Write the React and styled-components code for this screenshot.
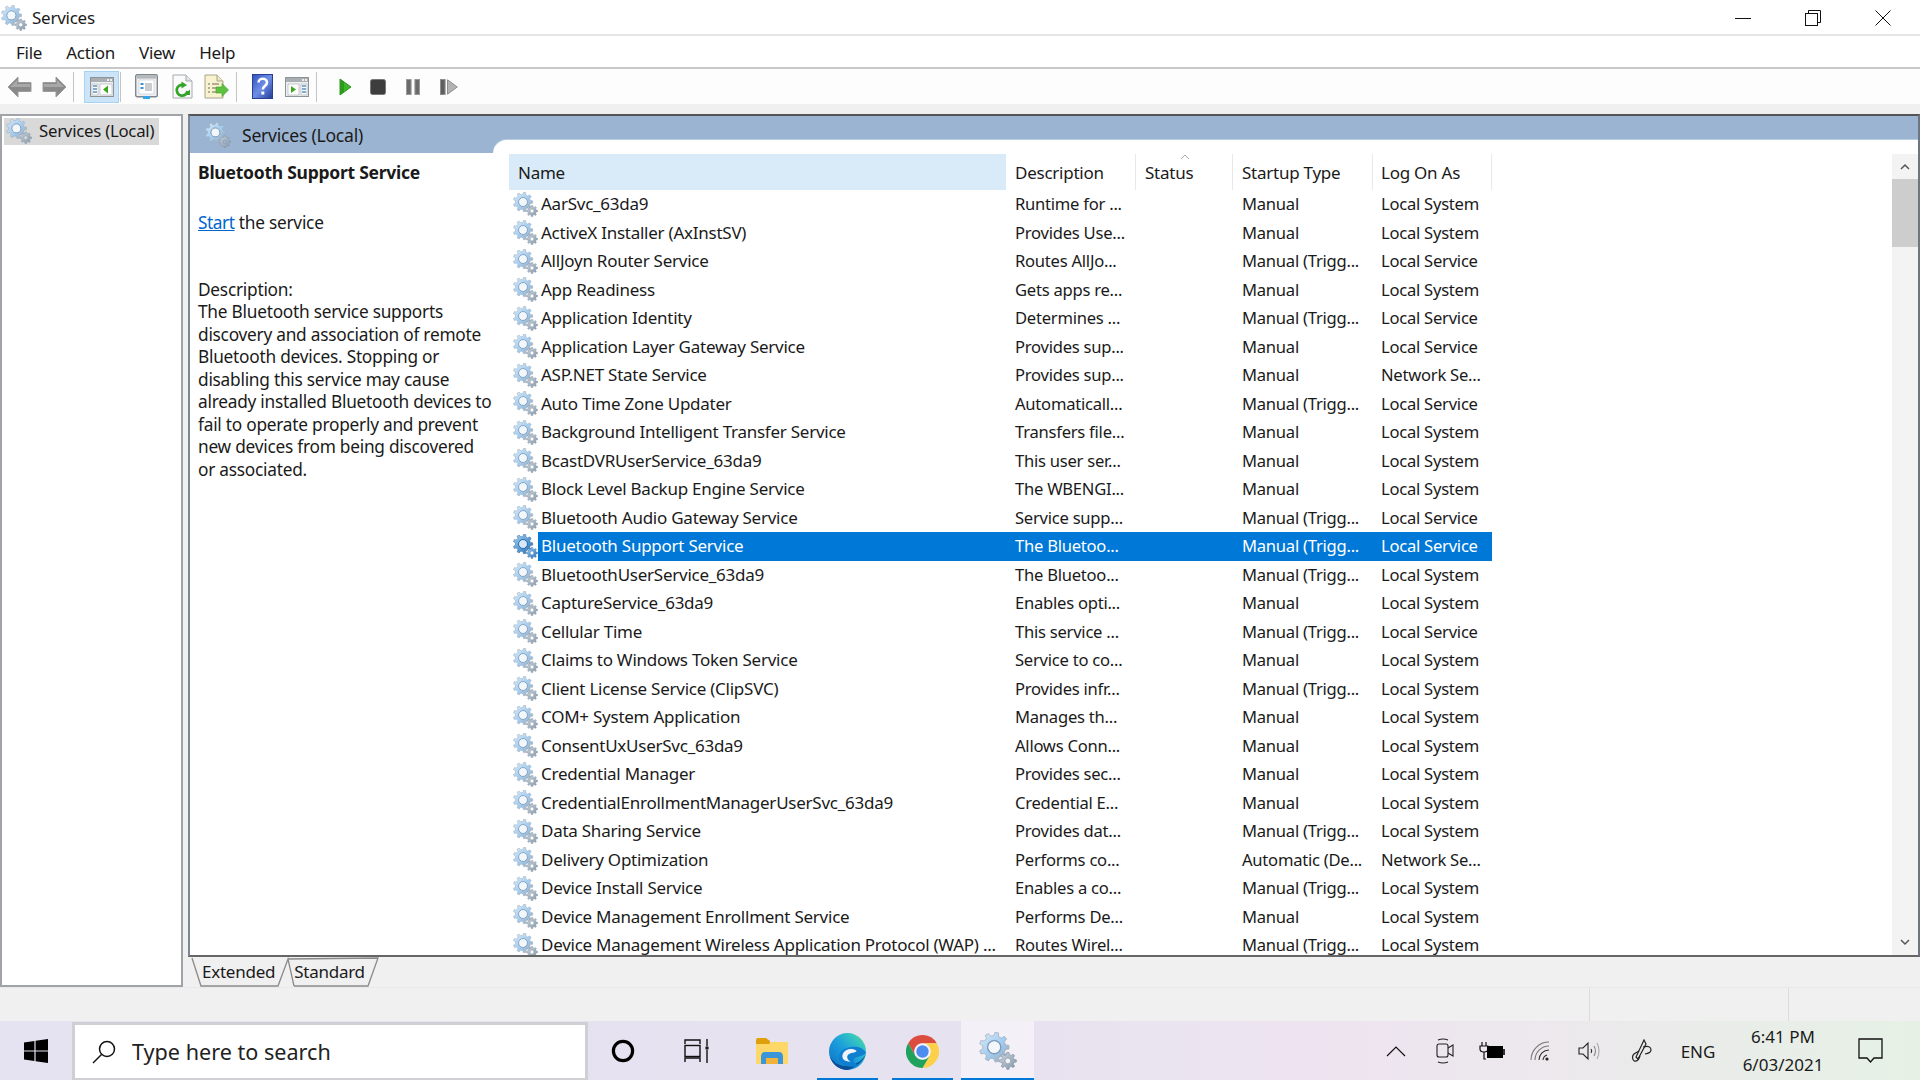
import React from 'react';
import styled, { createGlobalStyle } from 'styled-components';

const Global = createGlobalStyle`
  html, body { margin: 0; padding: 0; background: #f0f0f0; }
  body { font-family: "Noto Sans", "Open Sans", sans-serif; color: #1a1a1a; overflow: hidden; }
  * { box-sizing: border-box; }
`;

const Window = styled.div`width:1920px;height:1080px;display:flex;flex-direction:column;overflow:hidden;font-size:17px;letter-spacing:-0.25px;`;
const TitleBar = styled.div`height:36px;flex:none;background:#fff;border-bottom:2px solid #e5e5e5;display:flex;align-items:center;padding:2px 2px 0 1px;`;
const TitleText = styled.span`margin-left:5px;font-size:17px;line-height:20px;`;
const WinButtons = styled.div`margin-left:auto;display:flex;`;
const WinBtn = styled.div`width:70px;height:32px;display:flex;align-items:center;justify-content:center;`;
const MenuBar = styled.div`height:33px;flex:none;background:#fff;border-bottom:2px solid #c8c8c8;display:flex;align-items:center;padding:2px 0 0 16px;gap:24px;`;
const MenuItem = styled.span`font-size:17px;`;
const Toolbar = styled.div`height:35px;flex:none;background:#fdfdfd;display:flex;align-items:center;padding-left:7px;`;
const ToolSlot = styled.div`flex:none;display:flex;align-items:center;justify-content:center;margin-left:${p=>p.$ml||0}px;width:${p=>p.$w}px;height:${p=>p.$h||32}px;
  ${p=>p.$active?'background:#cce4f7;border:1px solid #a8d2f2;':''}`;
const Sep = styled.div`flex:none;width:1px;height:30px;background:#c4c4c4;margin-left:${p=>p.$ml||0}px;`;
const Workspace = styled.div`flex:none;height:883px;padding-top:10px;display:flex;background:#f0f0f0;`;
const TreePane = styled.div`width:183px;height:873px;flex:none;background:#fff;border:2px solid #a0a4a8;padding:2px;`;
const TreeItem = styled.div`width:155px;height:27px;background:#d9d9d9;display:flex;align-items:center;padding:0 0 2px 2px;gap:7px;font-size:16.8px;white-space:nowrap;`;
const MainCol = styled.div`margin-left:5px;flex:1;display:flex;flex-direction:column;min-width:0;`;
const MainPane = styled.div`height:843px;flex:none;display:flex;background:#fff;border:2px solid #6c7580;border-top:2px solid #555;border-left:2px solid #7b8794;border-bottom:2px solid #666;overflow:hidden;`;
const InfoCol = styled.div`width:303px;flex:none;display:flex;flex-direction:column;`;
const Band = styled.div`height:37px;flex:none;background:#9ab4d1;display:flex;align-items:center;padding-left:15px;gap:11px;font-size:17.6px;`;
const InfoBody = styled.div`padding:8px 0 0 8px;line-height:22.45px;font-size:17.3px;white-space:nowrap;`;
const InfoTitle = styled.div`font-weight:700;font-size:17.5px;`;
const StartLine = styled.div`margin-top:29px;`;
const StartLink = styled.span`color:#0066cc;text-decoration:underline;letter-spacing:-0.45px;`;
const Desc = styled.div`margin-top:44px;`;
const ListCol = styled.div`flex:1;min-width:0;background:linear-gradient(#9ab4d1 37px,#fff 37px);`;
const ListInner = styled.div`height:calc(100% - 23px);margin-top:23px;background:#fff;border-top-left-radius:14px;padding:14px 0 0 16px;display:flex;position:relative;overflow:hidden;border-top:1px solid #b8cde4;`;
const Table = styled.div`width:983px;flex:none;`;
const HeadRow = styled.div`display:grid;grid-template-columns:497px 130px 97px 140px 119px;height:36px;`;
const HeadCell = styled.div`display:flex;align-items:center;padding-left:${p=>p.$pl}px;position:relative;font-size:17px;background:${p=>p.$sel?'#d9ebf9':'transparent'};border-right:${p=>p.$sel?'none':'1px solid #e8e8e8'};`;
const Caret = styled.svg`position:absolute;left:43px;top:-1px;`;
const Row = styled.div`display:grid;grid-template-columns:497px 130px 97px 140px 119px;height:28.5px;align-items:stretch;font-size:16.6px;white-space:nowrap;color:${p=>p.$sel?'#fff':'#1a1a1a'};`;
const NameCell = styled.div`display:flex;align-items:stretch;overflow:hidden;`;
const IconBox = styled.div`width:29px;flex:none;display:flex;align-items:center;padding-left:4px;`;
const NameLabel = styled.div`flex:1;display:flex;align-items:center;padding:0 0 1px 3px;font-size:17px;background:${p=>p.$sel?'#0078d7':'transparent'};`;
const Cell = styled.div`display:flex;align-items:center;padding:0 0 1px ${p=>p.$pl||0}px;background:${p=>p.$sel?'#0078d7':'transparent'};`;
const Scroll = styled.div`position:absolute;right:0;top:0;bottom:0;width:26px;background:#f3f3f3;display:flex;flex-direction:column;align-items:center;margin-top:14px;`;
const ScrollArrow = styled.div`height:25px;width:100%;flex:none;display:flex;align-items:center;justify-content:center;background:#f3f3f3;`;
const Thumb = styled.div`width:100%;height:68px;background:#cdcdcd;flex:none;`;
const ScrollFill = styled.div`flex:1;`;
const TabBar = styled.div`height:30px;flex:none;display:flex;position:relative;padding-left:14px;align-items:center;font-size:17px;`;
const TabShapes = styled.svg`position:absolute;left:0;top:0;`;
const TabLabel = styled.span`margin-right:19px;position:relative;line-height:26px;`;
const StatusBar = styled.div`height:34px;flex:none;background:#f0f0f0;border-top:1px solid #e8e8e8;display:flex;justify-content:flex-end;`;
const StatusSeg = styled.div`width:${p=>p.$w}px;border-left:1px solid #dcdcdc;`;
const Taskbar = styled.div`height:60px;flex:none;display:flex;align-items:stretch;background:linear-gradient(90deg,#e5e2f1 0%,#e6e2f0 50%,#eee4f0 70%,#ece9ec 82%,#e6f1e5 100%);`;
const StartBtn = styled.div`width:72px;flex:none;display:flex;align-items:center;justify-content:center;`;
const SearchBox = styled.div`width:516px;flex:none;background:#fff;border:3px solid #cfcfd4;display:flex;align-items:center;padding-left:17px;gap:16px;font-size:21.6px;letter-spacing:0;color:#222;margin-top:1px;`;
const TaskSlot = styled.div`flex:none;width:${p=>p.$w}px;margin-left:${p=>p.$ml||0}px;display:flex;align-items:center;justify-content:center;position:relative;background:${p=>p.$on?'#f3f0f8':'transparent'};
  ${p=>p.$run?`&::after{content:"";position:absolute;left:0;right:0;bottom:0;height:3px;background:#0078d7;}`:''}`;
const Tray = styled.div`margin-left:auto;display:flex;align-items:center;height:100%;`;
const TrayItem = styled.div`flex:none;width:${p=>p.$w}px;display:flex;align-items:center;justify-content:center;`;
const Lang = styled.span`font-size:17px;letter-spacing:0;`;
const Clock = styled.div`flex:none;width:118px;text-align:center;font-size:17px;line-height:28px;letter-spacing:0;`;

function gearD(cx, cy, ro, ri, n, hole) {
  let d = '';
  const step = (Math.PI * 2) / n;
  for (let i = 0; i < n; i++) {
    const a = i * step;
    const w = step * 0.17, w2 = step * 0.3;
    const pts = [[ri, a - w2], [ro, a - w], [ro, a + w], [ri, a + w2]];
    pts.forEach(([r, t], j) => {
      const x = (cx + r * Math.cos(t)).toFixed(2), y = (cy + r * Math.sin(t)).toFixed(2);
      d += (i === 0 && j === 0 ? 'M' : 'L') + x + ' ' + y + ' ';
    });
  }
  d += 'Z ';
  d += `M${cx + hole} ${cy} A${hole} ${hole} 0 1 0 ${cx - hole} ${cy} A${hole} ${hole} 0 1 0 ${cx + hole} ${cy} Z`;
  return d;
}

const Defs = () => (
  <svg width="0" height="0" style={{ position: 'absolute' }}>
    <defs>
      <linearGradient id="gA" x1="0" y1="0" x2="1" y2="1">
        <stop offset="0" stopColor="#d8ebfa" /><stop offset=".55" stopColor="#a3cbee" /><stop offset="1" stopColor="#9aa6b2" />
      </linearGradient>
      <linearGradient id="gB" x1="0" y1="0" x2="1" y2="1">
        <stop offset="0" stopColor="#cdd6de" /><stop offset="1" stopColor="#8296a8" />
      </linearGradient>
      <linearGradient id="gC" x1="0" y1="0" x2="1" y2="1">
        <stop offset="0" stopColor="#a9d4f5" /><stop offset=".6" stopColor="#4f93d3" /><stop offset="1" stopColor="#3b6ea5" />
      </linearGradient>
      <linearGradient id="eG" x1="0" y1="1" x2="1" y2="0">
        <stop offset="0" stopColor="#0b6cc4" /><stop offset=".5" stopColor="#1c9fdc" /><stop offset=".78" stopColor="#35c6c0" /><stop offset="1" stopColor="#6fdc6a" />
      </linearGradient>
    </defs>
  </svg>
);

const Gear = ({ size = 25, sel }) => (
  <svg width={size} height={size} viewBox="0 0 25 25">
    <path d={gearD(10, 10, 9.8, 7.6, 9, 4.3)} fill={sel ? 'url(#gC)' : 'url(#gA)'} fillRule="evenodd" stroke={sel ? '#3d6f9e' : '#a2aeba'} strokeWidth=".5" />
    <circle cx="10" cy="10" r="4.3" fill="none" stroke={sel ? '#1f5f9e' : '#7c9cbc'} strokeWidth=".9" />
    <circle cx="10" cy="10" r="3.7" fill={sel ? '#d4e8f8' : '#f2f7fc'} />
    <path d={gearD(19, 19, 5.6, 4.2, 8, 1.9)} fill={sel ? 'url(#gC)' : 'url(#gB)'} fillRule="evenodd" stroke={sel ? '#3d6f9e' : '#7c8c9c'} strokeWidth=".4" />
  </svg>
);

const Arrow = ({ flip }) => (
  <svg width="25" height="24" viewBox="0 0 25 24" style={flip ? { transform: 'scaleX(-1)' } : undefined}>
    <path d="M1 12 L11 2 L11 7.5 L24 7.5 L24 16.5 L11 16.5 L11 22 Z" fill="#8a8a8a" stroke="#9c9c9c" strokeLinejoin="round" />
    <path d="M3 12 L10 5 L10 9 L23 9 L23 12 Z" fill="#a8a8a8" />
  </svg>
);
const PanelIcon = ({ right }) => (
  <svg width="24" height="20" viewBox="0 0 24 20">
    <rect x=".5" y=".5" width="23" height="19" fill="#eef0f2" stroke="#8d9499" />
    <rect x="1" y="1" width="22" height="4" fill="#a9aeb3" />
    <rect x="17" y="2" width="2" height="2" fill="#eee" /><rect x="20" y="2" width="2" height="2" fill="#eee" />
    {right ? <>
      <rect x="3" y="7" width="11" height="11" fill="#fff" stroke="#b0b4b8" strokeWidth=".7" />
      <path d="M6 9 L11 12.5 L6 16 Z" fill="#3aa71e" />
      <rect x="16" y="7" width="6" height="11" fill="#fff" stroke="#b0b4b8" strokeWidth=".7" />
      <path d="M17 9h4M17 12h4M17 15h4" stroke="#5a8fc5" strokeWidth="1.6" />
    </> : <>
      <rect x="2" y="7" width="6" height="11" fill="#fff" stroke="#b0b4b8" strokeWidth=".7" />
      <path d="M3 9h4M3 12h4M3 15h4" stroke="#5a8fc5" strokeWidth="1.6" />
      <rect x="10" y="7" width="12" height="11" fill="#fff" stroke="#b0b4b8" strokeWidth=".7" />
      <path d="M18 8.5 L13 12.5 L18 16.5 Z" fill="#3aa71e" />
    </>}
  </svg>
);
const PropsIcon = () => (
  <svg width="23" height="25" viewBox="0 0 23 25">
    <rect x=".7" y=".7" width="21.6" height="22" rx="1.5" fill="#eef0f2" stroke="#7f868c" strokeWidth="1.4" />
    <rect x="2" y="2" width="19" height="2.6" fill="#b3b8bc" />
    <rect x="4" y="6" width="15" height="14" fill="#fff" stroke="#c2c6ca" strokeWidth=".6" />
    <rect x="5.5" y="9" width="3" height="2" fill="#3f8fd1" /><rect x="5.5" y="13" width="3" height="2" fill="#3f8fd1" />
    <path d="M10 10h7M10 12h7M10 14h7M10 16h7" stroke="#8a8f94" strokeWidth=".9" />
    <rect x="8" y="22" width="7" height="3" fill="#35a5e8" />
  </svg>
);
const RefreshIcon = () => (
  <svg width="21" height="25" viewBox="0 0 21 25">
    <path d="M1 1 H14 L20 7 V24 H1 Z" fill="#fafafa" stroke="#a5a9ad" />
    <path d="M14 1 V7 H20" fill="#e3e5e7" stroke="#a5a9ad" />
    <path d="M15.5 17 A5.4 5.4 0 1 1 11.5 11" fill="none" stroke="#35a32a" strokeWidth="2.8" />
    <path d="M9.5 7.5 L15 11 L9.5 14.5 Z" fill="#35a32a" />
    <path d="M12 21 L18 21 L18 15.5 Z" fill="#35a32a" />
  </svg>
);
const ExportIcon = () => (
  <svg width="25" height="25" viewBox="0 0 25 25">
    <path d="M1 1 H13 L19 7 V24 H1 Z" fill="#f8f2cf" stroke="#a7a48f" />
    <path d="M13 1 V7 H19" fill="#eee7bf" stroke="#a7a48f" />
    <path d="M4 10h2M8 10h7M4 14h2M8 14h5M4 18h2M8 18h5" stroke="#6a6a5c" strokeWidth="1.2" />
    <path d="M12 13 H18 V9.5 L24.5 16 L18 22.5 V19 H12 Z" fill="#5cc23f" stroke="#3f9e2a" strokeWidth=".6" />
  </svg>
);
const HelpIcon = () => (
  <svg width="21" height="25" viewBox="0 0 21 25">
    <defs><linearGradient id="hB" x1="0" y1="0" x2="1" y2="1"><stop offset="0" stopColor="#2d50c0" /><stop offset=".5" stopColor="#6f8fe6" /><stop offset="1" stopColor="#213a98" /></linearGradient></defs>
    <rect x=".5" y=".5" width="20" height="24" fill="url(#hB)" stroke="#2a3f8f" />
    <path d="M6.5 8.5 C6.5 3.5 15 3.5 15 8.5 C15 12 10.8 12 10.8 15.5" fill="none" stroke="#fff" strokeWidth="2.6" />
    <rect x="9.3" y="17.5" width="3" height="3" fill="#fff" />
  </svg>
);
const Play = () => (<svg width="13" height="18" viewBox="0 0 13 18"><path d="M1 1 L12 9 L1 17 Z" fill="#3fb52a" stroke="#2d9a1c" /><path d="M1 1 L5 4 V14 L1 17Z" fill="#2d9a1c"/></svg>);
const Stop = () => (<svg width="16" height="16" viewBox="0 0 16 16"><rect x=".5" y=".5" width="15" height="15" rx="2" fill="#3d3d3d" stroke="#777" /></svg>);
const Pause = () => (<svg width="14" height="16" viewBox="0 0 14 16"><rect x=".5" y=".5" width="4.6" height="15" fill="#6b6b6b" stroke="#9a9a9a" /><rect x="8.9" y=".5" width="4.6" height="15" fill="#6b6b6b" stroke="#9a9a9a" /></svg>);
const Resume = () => (<svg width="18" height="16" viewBox="0 0 18 16"><rect x=".5" y=".5" width="4.6" height="15" fill="#5f5f5f" stroke="#8e8e8e" /><path d="M7.5 .8 L17.3 8 L7.5 15.2 Z" fill="#b3b3b3" stroke="#8e8e8e" /></svg>);

const WinLogo = () => (
  <svg width="24" height="24" viewBox="0 0 24 24"><path d="M0 3.4 L10.4 2 V11.4 H0 Z M11.6 1.8 L24 0 V11.4 H11.6 Z M0 12.6 H10.4 V22 L0 20.6 Z M11.6 12.6 H24 V24 L11.6 22.2 Z" fill="#000" /></svg>
);
const SearchIcon = () => (
  <svg width="24" height="24" viewBox="0 0 24 24" fill="none" stroke="#111" strokeWidth="1.5"><circle cx="15" cy="9" r="7.5" /><path d="M9.5 14.5 L1 23" /></svg>
);
const Cortana = () => (<svg width="24" height="24" viewBox="0 0 24 24"><circle cx="12" cy="12" r="9.6" fill="none" stroke="#000" strokeWidth="3.2" /></svg>);
const TaskView = () => (
  <svg width="26" height="24" viewBox="0 0 26 24" fill="none" stroke="#111" strokeWidth="1.4">
    <path d="M1 5 V1 H16 V5 M1 23 V19 H16 V23" />
    <rect x="1" y="6.5" width="15" height="11" />
    <path d="M23 0 V7 M23 11 V24" /><rect x="21.5" y="7.5" width="3" height="3" fill="#111" stroke="none" />
  </svg>
);
const Folder = () => (
  <svg width="32" height="27" viewBox="0 0 32 27">
    <path d="M0 2 Q0 0 2 0 H10 L14 3 V8 H0 Z" fill="#dfa00c" />
    <path d="M0 6 H13 L15 4 H31 Q32 4 32 5 V25 Q32 26 31 26 H1 Q0 26 0 25 Z" fill="#fdd768" />
    <path d="M5 26 V19 Q5 14 9 14 H23 Q27 14 27 19 V26 H22 V20 H10 V26 Z" fill="#3a96d8" />
    <rect x="10" y="20" width="12" height="6" fill="#f0b23a" />
  </svg>
);
const Edge = () => (
  <svg width="37" height="37" viewBox="0 0 36 36">
    <circle cx="18" cy="18" r="18" fill="url(#eG)" />
    <path d="M36 20 C34 27 27 33 18 36 C10 36 3 30 1 23 C6 31 15 34 23 31 C29 29 34 25 36 20 Z" fill="#0c4f94" />
    <path d="M36 19.5 C33 23 27 23 25 24.5 C22 27 25 30 29 31.5 C22 34 15 33 11 28 C8 24 10 17 16 15 C24 12 33 13 36 19.5 Z" fill="#0f7fd0" />
    <path d="M27 17.5 C22 13.5 14 16 13 22 C12.6 26 16 28 21 28 C17.5 26 16.5 22.5 19.5 20.5 C21.5 19 25 19.5 27 17.5 Z" fill="#f1f5fb" />
  </svg>
);
const Chrome = () => (
  <svg width="33" height="33" viewBox="0 0 48 48">
    <path d="M3.2 12 A24 24 0 0 1 44.8 12 L24 12 A12 12 0 0 0 13.6 30 Z" fill="#dc4d3f" />
    <path d="M44.8 12 A24 24 0 0 1 24 48 L34.4 30 A12 12 0 0 0 24 12 Z" fill="#fdd04a" />
    <path d="M24 48 A24 24 0 0 1 3.2 12 L13.6 30 A12 12 0 0 0 34.4 30 Z" fill="#1fa25b" />
    <circle cx="24" cy="24" r="11.5" fill="#f5f5fa" /><circle cx="24" cy="24" r="9" fill="#4f8cf0" />
  </svg>
);
const Chevron = () => (<svg width="20" height="12" viewBox="0 0 20 12" fill="none" stroke="#111" strokeWidth="1.2"><path d="M1 11 L10 2 L19 11" /></svg>);
const Meet = () => (
  <svg width="18" height="26" viewBox="0 0 18 26" fill="none" stroke="#222" strokeWidth="1.1">
    <rect x="1" y="6" width="11" height="13" rx="2" /><path d="M12 10 L17 7 V18 L12 15" />
    <path d="M2 2 Q7 0 12 2 M2 24 Q7 26 12 24" />
  </svg>
);
const Battery = () => (
  <svg width="26" height="20" viewBox="0 0 26 20">
    <path d="M3 1v4M7 1v4M1 5h8v3q0 3-4 3t-4-3z" fill="none" stroke="#111" strokeWidth="1.2" /><path d="M5 11v7h2" fill="none" stroke="#111" strokeWidth="1.2" />
    <rect x="8" y="5" width="16" height="12" fill="#000" /><rect x="24" y="8" width="2" height="6" fill="#333" />
  </svg>
);
const Wifi = () => (
  <svg width="20" height="20" viewBox="0 0 20 20" fill="none" strokeWidth="1.1">
    <path d="M1 19 A18 18 0 0 1 19 1" stroke="#777" /><path d="M5 19 A14 14 0 0 1 19 5" stroke="#777" /><path d="M9 19 A10 10 0 0 1 19 9" stroke="#333" /><path d="M13 19 A6 6 0 0 1 17 14" stroke="#333" />
    <circle cx="17" cy="18" r="1.6" fill="#222" />
  </svg>
);
const Speaker = () => (
  <svg width="22" height="20" viewBox="0 0 22 20" fill="none" strokeWidth="1.1">
    <path d="M1 7 H5 L10 2 V18 L5 13 H1 Z" stroke="#222" /><path d="M13 8 Q14.5 10 13 12" stroke="#222" /><path d="M16 5 Q19 10 16 15" stroke="#888" /><path d="M19 2 Q23 10 19 18" stroke="#aaa" />
  </svg>
);
const Pen = () => (
  <svg width="22" height="24" viewBox="0 0 22 24" fill="none" stroke="#222" strokeWidth="1.2">
    <path d="M13 1 L5 18 L7 20 L15 5 Z" /><path d="M3 22 Q0 18 3 15 L8 12 M3 22 Q7 23 9 17 M12 8 Q20 6 20 11 Q20 14 14 15" />
  </svg>
);
const Notify = () => (
  <svg width="26" height="26" viewBox="0 0 26 26" fill="none" stroke="#111" strokeWidth="1.3"><path d="M1 1 H24 V20 H16 L12.5 24 L9 20 H1 Z" /></svg>
);

const rows = [
  ['AarSvc_63da9', 'Runtime for ...', 'Manual', 'Local System'],
  ['ActiveX Installer (AxInstSV)', 'Provides Use...', 'Manual', 'Local System'],
  ['AllJoyn Router Service', 'Routes AllJo...', 'Manual (Trigg...', 'Local Service'],
  ['App Readiness', 'Gets apps re...', 'Manual', 'Local System'],
  ['Application Identity', 'Determines ...', 'Manual (Trigg...', 'Local Service'],
  ['Application Layer Gateway Service', 'Provides sup...', 'Manual', 'Local Service'],
  ['ASP.NET State Service', 'Provides sup...', 'Manual', 'Network Se...'],
  ['Auto Time Zone Updater', 'Automaticall...', 'Manual (Trigg...', 'Local Service'],
  ['Background Intelligent Transfer Service', 'Transfers file...', 'Manual', 'Local System'],
  ['BcastDVRUserService_63da9', 'This user ser...', 'Manual', 'Local System'],
  ['Block Level Backup Engine Service', 'The WBENGI...', 'Manual', 'Local System'],
  ['Bluetooth Audio Gateway Service', 'Service supp...', 'Manual (Trigg...', 'Local Service'],
  ['Bluetooth Support Service', 'The Bluetoo...', 'Manual (Trigg...', 'Local Service', true],
  ['BluetoothUserService_63da9', 'The Bluetoo...', 'Manual (Trigg...', 'Local System'],
  ['CaptureService_63da9', 'Enables opti...', 'Manual', 'Local System'],
  ['Cellular Time', 'This service ...', 'Manual (Trigg...', 'Local Service'],
  ['Claims to Windows Token Service', 'Service to co...', 'Manual', 'Local System'],
  ['Client License Service (ClipSVC)', 'Provides infr...', 'Manual (Trigg...', 'Local System'],
  ['COM+ System Application', 'Manages th...', 'Manual', 'Local System'],
  ['ConsentUxUserSvc_63da9', 'Allows Conn...', 'Manual', 'Local System'],
  ['Credential Manager', 'Provides sec...', 'Manual', 'Local System'],
  ['CredentialEnrollmentManagerUserSvc_63da9', 'Credential E...', 'Manual', 'Local System'],
  ['Data Sharing Service', 'Provides dat...', 'Manual (Trigg...', 'Local System'],
  ['Delivery Optimization', 'Performs co...', 'Automatic (De...', 'Network Se...'],
  ['Device Install Service', 'Enables a co...', 'Manual (Trigg...', 'Local System'],
  ['Device Management Enrollment Service', 'Performs De...', 'Manual', 'Local System'],
  ['Device Management Wireless Application Protocol (WAP) ...', 'Routes Wirel...', 'Manual (Trigg...', 'Local System'],
];

const descLines = [
  'Description:',
  'The Bluetooth service supports',
  'discovery and association of remote',
  'Bluetooth devices.  Stopping or',
  'disabling this service may cause',
  'already installed Bluetooth devices to',
  'fail to operate properly and prevent',
  'new devices from being discovered',
  'or associated.',
];

export default function App() {
  return (
    <Window>
      <Global />
      <Defs />
      <TitleBar>
        <Gear size={26} />
        <TitleText>Services</TitleText>
        <WinButtons>
          <WinBtn><svg width="16" height="16" viewBox="0 0 16 16"><path d="M0 8.5H16" stroke="#111" /></svg></WinBtn>
          <WinBtn><svg width="16" height="16" viewBox="0 0 16 16" fill="none" stroke="#111"><rect x=".5" y="3.5" width="12" height="12" /><path d="M3.5 3.5 V.5 H15.5 V12.5 H12.5" /></svg></WinBtn>
          <WinBtn><svg width="16" height="16" viewBox="0 0 16 16" stroke="#111"><path d="M.5 .5 L15.5 15.5 M15.5 .5 L.5 15.5" /></svg></WinBtn>
        </WinButtons>
      </TitleBar>
      <MenuBar>
        <MenuItem>File</MenuItem><MenuItem>Action</MenuItem><MenuItem>View</MenuItem><MenuItem>Help</MenuItem>
      </MenuBar>
      <Toolbar>
        <ToolSlot $w={25}><Arrow /></ToolSlot>
        <ToolSlot $w={25} $ml={10}><Arrow flip /></ToolSlot>
        <Sep $ml={6} />
        <ToolSlot $w={35} $ml={10} $active><PanelIcon /></ToolSlot>
        <Sep $ml={1} />
        <ToolSlot $w={23} $ml={14}><PropsIcon /></ToolSlot>
        <ToolSlot $w={21} $ml={14}><RefreshIcon /></ToolSlot>
        <ToolSlot $w={25} $ml={11}><ExportIcon /></ToolSlot>
        <Sep $ml={7} />
        <ToolSlot $w={21} $ml={15}><HelpIcon /></ToolSlot>
        <ToolSlot $w={24} $ml={12}><PanelIcon right /></ToolSlot>
        <Sep $ml={7} />
        <ToolSlot $w={13} $ml={22}><Play /></ToolSlot>
        <ToolSlot $w={16} $ml={18}><Stop /></ToolSlot>
        <ToolSlot $w={14} $ml={20}><Pause /></ToolSlot>
        <ToolSlot $w={18} $ml={20}><Resume /></ToolSlot>
      </Toolbar>
      <Workspace>
        <TreePane>
          <TreeItem><Gear size={26} />Services (Local)</TreeItem>
        </TreePane>
        <MainCol>
          <MainPane>
            <InfoCol>
              <Band><Gear size={26} />Services (Local)</Band>
              <InfoBody>
                <InfoTitle>Bluetooth Support Service</InfoTitle>
                <StartLine><StartLink>Start</StartLink> the service</StartLine>
                <Desc>{descLines.map(l => <div key={l}>{l}</div>)}</Desc>
              </InfoBody>
            </InfoCol>
            <ListCol>
              <ListInner>
                <Table>
                  <HeadRow>
                    <HeadCell $pl={9} $sel>Name</HeadCell>
                    <HeadCell $pl={9}>Description</HeadCell>
                    <HeadCell $pl={9}>
                      <Caret width="12" height="7" viewBox="0 0 12 7" fill="none" stroke="#aaa"><path d="M2 6 L6 2 L10 6" /></Caret>
                      Status
                    </HeadCell>
                    <HeadCell $pl={9}>Startup Type</HeadCell>
                    <HeadCell $pl={8}>Log On As</HeadCell>
                  </HeadRow>
                  {rows.map(r => (
                    <Row key={r[0]} $sel={r[4]}>
                      <NameCell><IconBox><Gear sel={r[4]} /></IconBox><NameLabel $sel={r[4]}>{r[0]}</NameLabel></NameCell>
                      <Cell $pl={9} $sel={r[4]}>{r[1]}</Cell>
                      <Cell $sel={r[4]} />
                      <Cell $pl={9} $sel={r[4]}>{r[2]}</Cell>
                      <Cell $pl={8} $sel={r[4]}>{r[3]}</Cell>
                    </Row>
                  ))}
                </Table>
                <Scroll>
                  <ScrollArrow><svg width="10" height="7" viewBox="0 0 10 7" fill="none" stroke="#555" strokeWidth="1.5"><path d="M1 6 L5 2 L9 6" /></svg></ScrollArrow>
                  <Thumb />
                  <ScrollFill />
                  <ScrollArrow><svg width="10" height="7" viewBox="0 0 10 7" fill="none" stroke="#555" strokeWidth="1.5"><path d="M1 1 L5 5 L9 1" /></svg></ScrollArrow>
                </Scroll>
              </ListInner>
            </ListCol>
          </MainPane>
          <TabBar>
            <TabShapes width="200" height="30" viewBox="0 0 200 30" fill="none" stroke="#8a8a8a" strokeWidth="1.3">
              <path d="M4 1 L13 29 H90 L100 2 L106 29" />
              <path d="M100 2 L190 1 L180 29 H106" />
            </TabShapes>
            <TabLabel>Extended</TabLabel>
            <TabLabel>Standard</TabLabel>
          </TabBar>
        </MainCol>
      </Workspace>
      <StatusBar>
        <StatusSeg $w={199} /><StatusSeg $w={132} />
      </StatusBar>
      <Taskbar>
        <StartBtn><WinLogo /></StartBtn>
        <SearchBox><SearchIcon />Type here to search</SearchBox>
        <TaskSlot $w={70}><Cortana /></TaskSlot>
        <TaskSlot $w={70} $ml={4}><TaskView /></TaskSlot>
        <TaskSlot $w={61} $ml={9}><Folder /></TaskSlot>
        <TaskSlot $w={61} $ml={15} $run><Edge /></TaskSlot>
        <TaskSlot $w={61} $ml={14} $run><Chrome /></TaskSlot>
        <TaskSlot $w={73} $ml={8} $run $on><Gear size={38} /></TaskSlot>
        <Tray>
          <TrayItem $w={48}><Chevron /></TrayItem>
          <TrayItem $w={49}><Meet /></TrayItem>
          <TrayItem $w={46}><Battery /></TrayItem>
          <TrayItem $w={50}><Wifi /></TrayItem>
          <TrayItem $w={47}><Speaker /></TrayItem>
          <TrayItem $w={60}><Pen /></TrayItem>
          <TrayItem $w={52}><Lang>ENG</Lang></TrayItem>
          <Clock><div>6:41 PM</div><div>6/03/2021</div></Clock>
          <TrayItem $w={58}><Notify /></TrayItem>
          <TrayItem $w={20} />
        </Tray>
      </Taskbar>
    </Window>
  );
}
